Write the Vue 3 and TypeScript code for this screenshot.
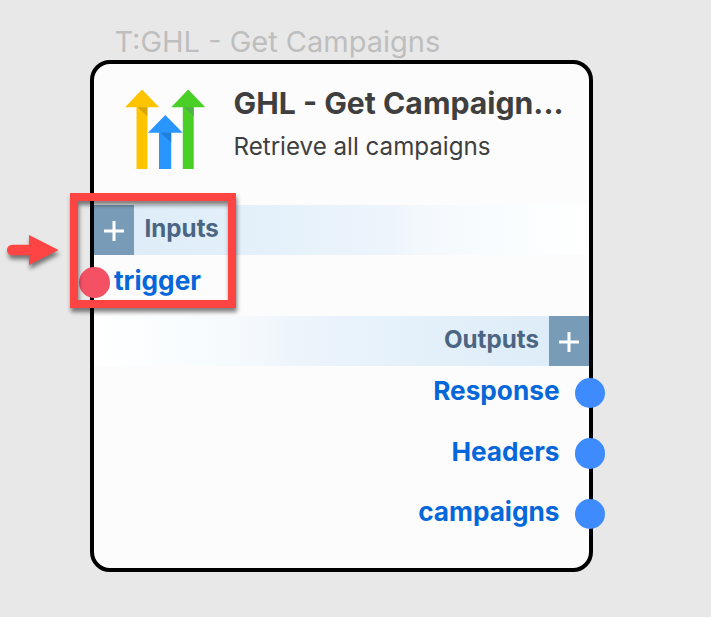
<script setup lang="ts">
interface Port {
  name: string
}

const nodeLabel = 'T:GHL - Get Campaigns'
const title = 'GHL - Get Campaign...'
const description = 'Retrieve all campaigns'
const inputs: Port[] = [{ name: 'trigger' }]
const outputs: Port[] = [{ name: 'Response' }, { name: 'Headers' }, { name: 'campaigns' }]
</script>

<template>
  <main class="canvas">
    <div class="label">{{ nodeLabel }}</div>
    <section class="node">
      <header class="head">
        <svg class="logo" viewBox="0 0 82 80" width="82" height="80">
          <path fill="#ffc400" d="M18 .6 35.2 18.3H23.4V80H12.5V18.3H1z" />
          <path fill="#d9a60a" d="M13.4 18.3h10v9z" />
          <path fill="#4acf27" d="M64.2.6 81.3 18.3H69.7V80H58.8V18.3H47.2z" />
          <path fill="#50b345" d="M59.7 18.3h10v9z" />
          <path fill="#2995ff" d="M41.3 26 58.7 43.8H47.2V80H35V43.8H24z" />
          <path fill="#1f80db" d="M36.4 43.8h10.8v9.8z" />
        </svg>
        <div class="heading">
          <h1 class="title">{{ title }}</h1>
          <p class="desc">{{ description }}</p>
        </div>
      </header>

      <div class="bar bar-in">
        <button class="add" aria-label="Add input">
          <svg viewBox="0 0 20 20" width="20" height="20"><path d="M10 0v20M0 10h20" /></svg>
        </button>
        <span class="bar-text">Inputs</span>
      </div>
      <div v-for="port in inputs" :key="port.name" class="port port-in">
        <span class="dot dot-in"></span>
        <span class="port-name">{{ port.name }}</span>
      </div>

      <div class="bar bar-out">
        <span class="bar-text">Outputs</span>
        <button class="add" aria-label="Add output">
          <svg viewBox="0 0 20 20" width="20" height="20"><path d="M10 0v20M0 10h20" /></svg>
        </button>
      </div>
      <div v-for="port in outputs" :key="port.name" class="port port-out">
        <span class="port-name">{{ port.name }}</span>
        <span class="dot dot-out"></span>
      </div>
    </section>

    <div class="highlight"></div>
    <svg class="pointer" viewBox="0 0 70 50" width="70" height="50">
      <path d="M12.2 19.8H29V10l29.6 15L29 40v-9.7H12.2a5.25 5.25 0 0 1 0-10.5z" />
    </svg>
  </main>
</template>

<style>
body {
  margin: 0;
  background: #e8e8e8;
}
</style>

<style scoped>
.canvas {
  position: relative;
  box-sizing: border-box;
  width: 711px;
  height: 617px;
  padding: 24px 0 0 89.5px;
  overflow: hidden;
  background: #e8e8e8;
  font-family: Inter, sans-serif;
}
.label {
  height: 36px;
  padding-left: 25px;
  color: #bebebe;
  font-size: 29px;
  line-height: 36px;
  white-space: nowrap;
}
.node {
  box-sizing: border-box;
  width: 503.5px;
  height: 511.5px;
  border: 4px solid #000;
  border-radius: 20px;
  background: #fcfcfc;
}
.head {
  display: flex;
  box-sizing: border-box;
  height: 141px;
  padding: 25px 0 0 30.5px;
}
.logo {
  flex: none;
}
.heading {
  padding-left: 27.5px;
  white-space: nowrap;
}
.title {
  margin: -6px 0 0;
  color: #3f3f3f;
  font-size: 30.2px;
  font-weight: 700;
  line-height: 40px;
}
.desc {
  margin: 8px 0 0;
  color: #3f3f3f;
  font-size: 24.15px;
  line-height: 32px;
}
.bar {
  display: flex;
  height: 50px;
}
.bar-in {
  background: linear-gradient(90deg, #dcebf8, #e4f1fa 35%, #edf4fc 60%, #f3f8fc 66%, #f8fcfe 80%, #fff);
}
.bar-out {
  justify-content: flex-end;
  background: linear-gradient(270deg, #dcebf8, #e4f1fa 35%, #edf4fc 60%, #f3f8fc 66%, #f8fcfe 80%, #fff);
}
.add {
  display: flex;
  align-items: center;
  justify-content: center;
  width: 40.5px;
  padding: 2px 0 0 1px;
  border: 0;
  background: #789bb7;
}
.add path {
  fill: none;
  stroke: #fff;
  stroke-width: 3;
}
.bar-text {
  padding: 0 9.5px 0 10.5px;
  color: #4b6583;
  font-size: 24.2px;
  font-weight: 700;
  line-height: 48px;
}
.port {
  display: flex;
  height: 60.5px;
  color: #0567d9;
  font-size: 26.2px;
  font-weight: 700;
}
.port-in {
  height: 61px;
}
.port-out {
  justify-content: flex-end;
}
.port-name {
  line-height: 52px;
}
.port-out .port-name {
  line-height: 50px;
}
.dot {
  flex: none;
  width: 30.5px;
  height: 30.5px;
  margin-top: 12px;
  border-radius: 50%;
}
.dot-in {
  margin-right: 4.5px;
  margin-left: -14.5px;
  background: #f55165;
}
.dot-out {
  margin-top: 11.7px;
  margin-right: -16px;
  margin-left: 15px;
  background: #3d8bfd;
}
.highlight {
  position: absolute;
  top: 193px;
  left: 70px;
  box-sizing: border-box;
  width: 166px;
  height: 115px;
  border: 8px solid #ff4444;
  filter: drop-shadow(1px 4px 2px rgba(0, 0, 0, 0.5));
}
.pointer {
  position: absolute;
  top: 225px;
  left: 0;
  filter: drop-shadow(1px 4px 2px rgba(0, 0, 0, 0.5));
}
.pointer path {
  fill: #ff4444;
}
</style>
